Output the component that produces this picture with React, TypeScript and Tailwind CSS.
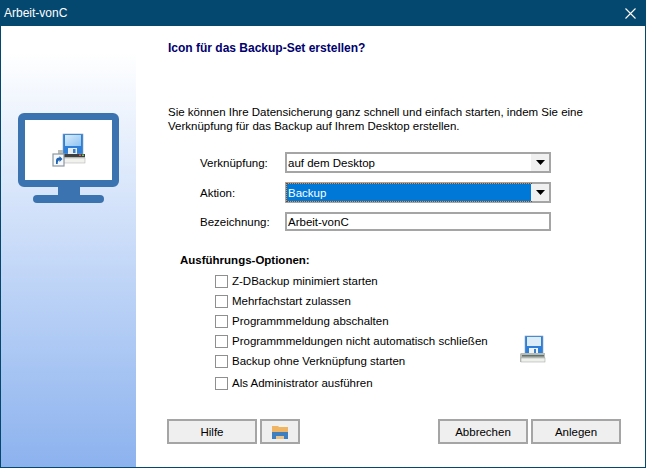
import React from "react";

function DiskPrinter({ shortcut }: { shortcut?: boolean }) {
  return (
    <svg width="34" height="34" viewBox="0 0 34 34" className="block">
      <defs>
        <linearGradient id="fl" x1="0" y1="0" x2="1" y2="1">
          <stop offset="0" stopColor="#d8ecfb" />
          <stop offset="1" stopColor="#8fc4f2" />
        </linearGradient>
      </defs>
      <rect x="11" y="1" width="20" height="20" fill="#2f7fd8" stroke="#8aa3b8" strokeWidth="0.6" />
      <rect x="13" y="2" width="16" height="11" fill="url(#fl)" />
      <rect x="16" y="15" width="9" height="6" fill="#e8eef2" />
      <rect x="21" y="16" width="2.5" height="4" fill="#3b7fca" />
      <path d="M6 17h5v4h20l2 1v8H6z" fill="#b9bdb8" />
      <rect x="9" y="21" width="24" height="3" fill="#3d3f40" />
      <rect x="27" y="21.5" width="2" height="1.5" fill="#d35c5c" />
      <rect x="30" y="21.5" width="2" height="1.5" fill="#74c465" />
      <rect x="11" y="25" width="22" height="5" fill="#f1f1ee" stroke="#a8aca8" strokeWidth="0.5" />
      {shortcut && (
        <g>
          <rect x="1" y="21" width="11" height="12" fill="#f6f8fa" stroke="#8d98a3" strokeWidth="1.2" />
          <path d="M4 31v-3.5q0-3 3.5-3v-1.5l3 3-3 3v-1.7q-1.8 0-1.8 3.7z" fill="#1e63b4" />
        </g>
      )}
    </svg>
  );
}

function SmallDisk() {
  return (
    <svg width="28" height="28" viewBox="0 0 28 28" className="block">
      <rect x="6" y="1" width="18" height="18" fill="#2f7fd8" stroke="#8aa3b8" strokeWidth="0.6" />
      <rect x="8" y="2" width="14" height="9" fill="#dcecf8" />
      <rect x="10" y="13" width="9" height="6" fill="#eef3f6" />
      <rect x="15" y="14" width="2" height="4" fill="#3b7fca" />
      <path d="M2 18h24v9H1v-8z" fill="#b7bcb8" />
      <rect x="3" y="20" width="22" height="1.5" fill="#61706a" />
      <rect x="2" y="23" width="24" height="4" fill="#eef0ec" stroke="#9a9f9b" strokeWidth="0.5" />
    </svg>
  );
}

function Combo({ text, selected }: { text: string; selected?: boolean }) {
  return (
    <div className="flex h-[21px] w-[266px] border-2 border-[#a5a5a5] bg-white">
      <div className={selected ? "flex flex-1 items-center bg-[#0078d7] pl-[1px] text-white outline-1 outline-dotted outline-[#7a4a20]" : "flex flex-1 items-center pl-[1px] text-black"}>
        {text}
      </div>
      <div className="flex w-[18px] items-center justify-center bg-[#f0f0f0]">
        <svg width="9" height="5" viewBox="0 0 9 5"><path d="M0 0h9L4.5 5z" fill="#000" /></svg>
      </div>
    </div>
  );
}

function Check({ label, checked, mt }: { label: string; checked?: boolean; mt: string }) {
  return (
    <div className={`flex h-[14px] items-center gap-[4px] ${mt}`}>
      <div className="flex h-[13px] w-[13px] shrink-0 items-center justify-center border border-[#8f8f8f] bg-white">
        {checked && (
          <svg width="9" height="8" viewBox="0 0 9 8"><path d="M1 4l2.5 2.5L8 1" fill="none" stroke="#0f6fd0" strokeWidth="2" /></svg>
        )}
      </div>
      <span className="whitespace-nowrap">{label}</span>
    </div>
  );
}

function Btn({ children, w }: { children: React.ReactNode; w: string }) {
  return (
    <button className={`flex h-[25px] ${w} items-center justify-center border-2 border-[#a5a5a5] bg-[#efefef] text-black`}>
      {children}
    </button>
  );
}

export default function App() {
  return (
    <div className="flex h-[468px] w-[646px] flex-col overflow-hidden bg-[#05486f] font-['Liberation_Sans',sans-serif] text-[11.5px] leading-[14px] text-black">
      <div className="flex h-[26px] shrink-0 items-center justify-between pl-[4px] pr-[10px] text-[12px] text-white">
        <span>Arbeit-vonC</span>
        <svg width="11" height="11" viewBox="0 0 11 11"><path d="M0.5 0.5l10 10M10.5 0.5l-10 10" stroke="#fff" strokeWidth="1.1" /></svg>
      </div>
      <div className="mx-[1px] mb-[1px] flex min-h-0 flex-1 bg-white">
        <div className="flex w-[135px] shrink-0 flex-col items-center bg-gradient-to-b from-white from-[6%] to-[#8cb2ee] pt-[87px]">
          <div className="flex h-[74px] w-[101px] items-center justify-center rounded-[6px] border-[7px] border-[#3b73b1] bg-white">
            <DiskPrinter shortcut />
          </div>
          <div className="h-[8px] w-[22px] bg-[#3b73b1]" />
          <div className="h-[8px] w-[71px] rounded-full bg-[#3b73b1]" />
        </div>
        <div className="flex min-w-0 flex-1 flex-col pl-[31px]">
          <div className="mt-[15px] h-[14px] pl-[1px] text-[12px] font-bold text-[#00006e]">Icon für das Backup-Set erstellen?</div>
          <div className="mt-[50px] pl-[1px]">
            <div>Sie können Ihre Datensicherung ganz schnell und einfach starten, indem Sie eine</div>
            <div>Verknüpfung für das Backup auf Ihrem Desktop erstellen.</div>
          </div>
          <div className="mt-[19px] flex items-center pl-[33px]">
            <span className="w-[85px]">Verknüpfung:</span>
            <Combo text="auf dem Desktop" />
          </div>
          <div className="mt-[9px] flex items-center pl-[33px]">
            <span className="w-[85px]">Aktion:</span>
            <Combo text="Backup" selected />
          </div>
          <div className="mt-[9px] flex items-center pl-[33px]">
            <span className="w-[85px]">Bezeichnung:</span>
            <div className="flex h-[19px] w-[266px] items-center border-2 border-[#a5a5a5] bg-white pl-[1px]">Arbeit-vonC</div>
          </div>
          <div className="mt-[22px] pl-[13px] font-bold">Ausführungs-Optionen:</div>
          <div className="mt-[7px] flex items-start pl-[48px]">
            <div className="flex w-[304px] flex-col">
              <Check label="Z-DBackup minimiert starten" mt="mt-0" />
              <Check label="Mehrfachstart zulassen" mt="mt-[6px]" />
              <Check label="Programmmeldung abschalten" mt="mt-[6px]" />
              <Check label="Programmmeldungen nicht automatisch schließen" mt="mt-[6px]" />
              <Check label="Backup ohne Verknüpfung starten" mt="mt-[6px]" />
              <Check label="Als Administrator ausführen" mt="mt-[8px]" />
            </div>
            <div className="mt-[61px]"><SmallDisk /></div>
          </div>
          <div className="mt-[29px] flex pl-[0px]">
            <Btn w="w-[90px]">Hilfe</Btn>
            <div className="ml-[3px]">
              <Btn w="w-[40px]">
                <svg width="16" height="14" viewBox="0 0 16 14">
                  <path d="M0 1h6l1 1h9v10H0z" fill="#f0b465" />
                  <rect x="7" y="0" width="8" height="2" fill="#f7f2e6" />
                  <path d="M0 7h16v7h-4v-3H4v3H0z" fill="#3f7fc0" />
                  <rect x="4" y="11" width="8" height="3" fill="#e9c48a" />
                </svg>
              </Btn>
            </div>
            <div className="ml-[138px]"><Btn w="w-[90px]">Abbrechen</Btn></div>
            <div className="ml-[3px]"><Btn w="w-[90px]">Anlegen</Btn></div>
          </div>
        </div>
      </div>
    </div>
  );
}
